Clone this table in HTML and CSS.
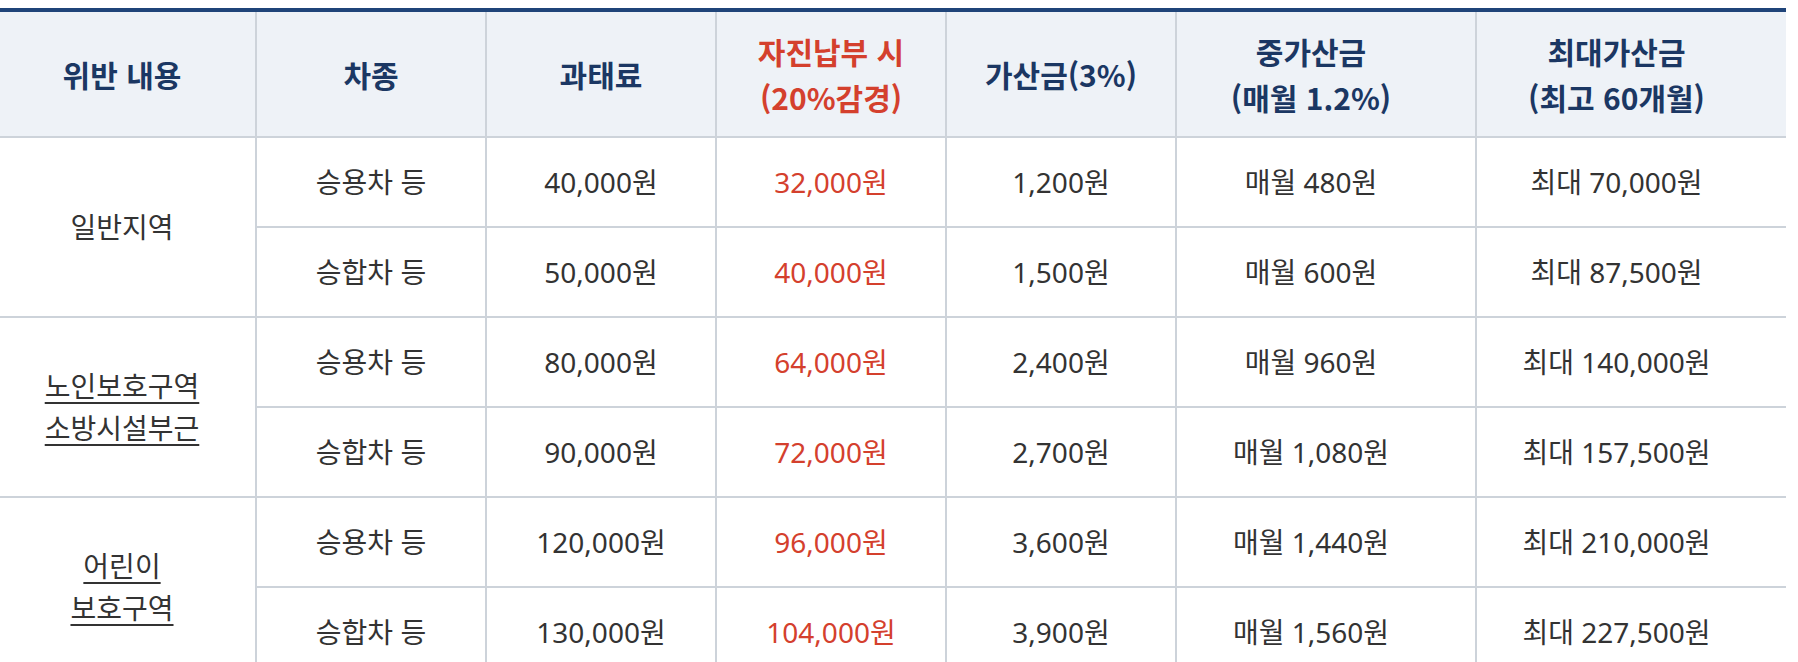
FILE: index.html
```html
<!DOCTYPE html>
<html lang="ko">
<head>
<meta charset="utf-8">
<title>과태료 안내</title>
<link rel="stylesheet" href="styles.css">
</head>
<body>
<div class="wrap">
<table class="fine-table">
  <colgroup>
    <col class="c1"><col class="c2"><col class="c3"><col class="c4"><col class="c5"><col class="c6"><col class="c7">
  </colgroup>
  <thead>
    <tr>
      <th class="area">위반 내용</th>
      <th>차종</th>
      <th>과태료</th>
      <th class="red">자진납부 시<br>(20%감경)</th>
      <th>가산금(3%)</th>
      <th class="shift">중가산금<br>(매월 1.2%)</th>
      <th class="shift">최대가산금<br>(최고 60개월)</th>
    </tr>
  </thead>
  <tbody>
    <tr>
      <td rowspan="2" class="area">일반지역</td>
      <td>승용차 등</td><td>40,000원</td><td class="red">32,000원</td><td>1,200원</td><td class="shift">매월 480원</td><td class="shift">최대 70,000원</td>
    </tr>
    <tr>
      <td>승합차 등</td><td>50,000원</td><td class="red">40,000원</td><td>1,500원</td><td class="shift">매월 600원</td><td class="shift">최대 87,500원</td>
    </tr>
    <tr>
      <td rowspan="2" class="area"><a href="#">노인보호구역<br>소방시설부근</a></td>
      <td>승용차 등</td><td>80,000원</td><td class="red">64,000원</td><td>2,400원</td><td class="shift">매월 960원</td><td class="shift">최대 140,000원</td>
    </tr>
    <tr>
      <td>승합차 등</td><td>90,000원</td><td class="red">72,000원</td><td>2,700원</td><td class="shift">매월 1,080원</td><td class="shift">최대 157,500원</td>
    </tr>
    <tr>
      <td rowspan="2" class="area"><a href="#">어린이<br>보호구역</a></td>
      <td>승용차 등</td><td>120,000원</td><td class="red">96,000원</td><td>3,600원</td><td class="shift">매월 1,440원</td><td class="shift">최대 210,000원</td>
    </tr>
    <tr>
      <td>승합차 등</td><td>130,000원</td><td class="red">104,000원</td><td>3,900원</td><td class="shift">매월 1,560원</td><td class="shift">최대 227,500원</td>
    </tr>
  </tbody>
</table>
</div>
</body>
</html>
```

FILE: styles.css
```css
html, body {
  margin: 0;
  padding: 0;
  background: #ffffff;
}

.wrap {
  padding-top: 8px;
  width: 1786px;
}

.fine-table {
  width: 1786px;
  table-layout: fixed;
  border-collapse: separate;
  border-spacing: 0;
  border-top: 4px solid #1f4479;
  font-family: "Noto Sans", "Noto Sans CJK KR", sans-serif;
  font-size: 28px;
  color: #333333;
}

.c1 { width: 257px; }
.c2 { width: 230px; }
.c3 { width: 230px; }
.c4 { width: 230px; }
.c5 { width: 230px; }
.c6 { width: 300px; }
.c7 { width: 309px; }

.fine-table th,
.fine-table td {
  padding: 0;
  text-align: center;
  vertical-align: middle;
  border-right: 2px solid #cdd3da;
  border-bottom: 2px solid #cdd3da;
  line-height: 42px;
}

.fine-table th:last-child,
.fine-table td:last-child {
  border-right: none;
}

.fine-table .area {
  border-right: 2px solid #cdd3da;
  padding-right: 11px;
}

.fine-table .shift {
  padding-right: 30px;
}

.fine-table thead tr {
  height: 126px;
}

.fine-table th {
  background: #eef2f7;
  color: #1b3763;
  font-family: "Noto Sans CJK KR", "Noto Sans", sans-serif;
  font-weight: 700;
  font-size: 30px;
  line-height: 46px;
}

.fine-table tbody tr {
  height: 90px;
}

.fine-table .red {
  color: #d4402d;
}

.fine-table a {
  color: #333333;
  text-decoration: underline;
  text-decoration-thickness: 2px;
  text-underline-offset: 5px;
}
```
